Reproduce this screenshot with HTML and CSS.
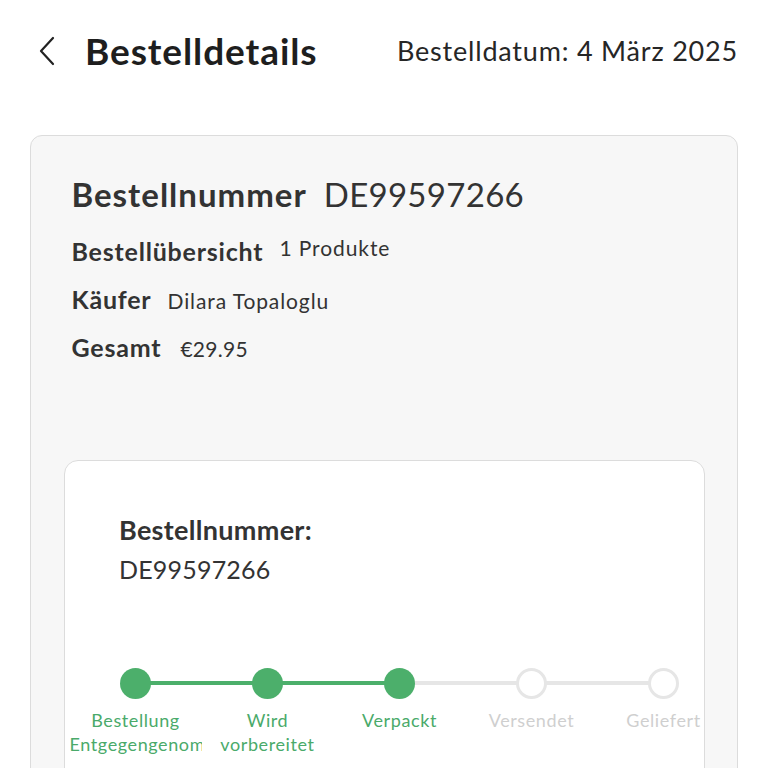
FILE: index.html
```html
<!DOCTYPE html>
<html lang="de">
<head>
<meta charset="utf-8">
<link rel="stylesheet" href="styles.css">
</head>
<body>
<div class="page">
  <header class="topbar">
    <div class="title-group">
      <svg class="back" width="18" height="30" viewBox="0 0 18 30"><path d="M15 2 L3 15 L15 28" fill="none" stroke="#222" stroke-width="2.2" stroke-linecap="round" stroke-linejoin="round"/></svg>
      <h1 class="title">Bestelldetails</h1>
    </div>
    <div class="date">Bestelldatum: 4 März 2025</div>
  </header>

  <section class="outer-card">
    <div class="order-head">
      <span class="oh-label">Bestellnummer</span>
      <span class="oh-value">DE99597266</span>
    </div>
    <div class="info-row">
      <span class="info-label">Bestellübersicht</span>
      <span class="info-value sup">1 Produkte</span>
    </div>
    <div class="info-row">
      <span class="info-label">Käufer</span>
      <span class="info-value">Dilara Topaloglu</span>
    </div>
    <div class="info-row">
      <span class="info-label">Gesamt</span>
      <span class="info-value wide">€29.95</span>
    </div>

    <div class="inner-card">
      <div class="inner-label">Bestellnummer:</div>
      <div class="inner-value">DE99597266</div>

      <div class="stepper">
        <div class="step done"><div class="track"><span class="line-r"></span><span class="dot"></span></div><div class="step-label">Bestellung<br>Entgegengenommen</div></div>
        <div class="step done"><div class="track"><span class="line-l"></span><span class="line-r"></span><span class="dot"></span></div><div class="step-label">Wird<br>vorbereitet</div></div>
        <div class="step done"><div class="track"><span class="line-l"></span><span class="line-r grey"></span><span class="dot"></span></div><div class="step-label">Verpackt</div></div>
        <div class="step todo"><div class="track"><span class="line-l"></span><span class="line-r"></span><span class="dot"></span></div><div class="step-label">Versendet</div></div>
        <div class="step todo"><div class="track"><span class="line-l"></span><span class="dot"></span></div><div class="step-label">Geliefert</div></div>
      </div>
    </div>
  </section>
</div>
</body>
</html>
```

FILE: styles.css
```css
* { box-sizing: border-box; }
html, body { margin: 0; padding: 0; background: #ffffff; }
body { font-family: "Lato", "Noto Sans", sans-serif; color: #222; }
.page { width: 768px; height: 768px; overflow: hidden; padding: 0 30px; }

.topbar {
  height: 105px;
  display: flex;
  align-items: center;
  justify-content: space-between;
  padding-bottom: 4px;
}
.title-group { display: flex; align-items: center; gap: 29px; padding-left: 8px; }
.back { display: block; }
.title { margin: 0; font-size: 37px; font-weight: 700; color: #1e1e1e; letter-spacing: 0.9px; }
.date { font-size: 27px; font-weight: 400; color: #262626; letter-spacing: 0.8px; }

.outer-card {
  margin-top: 30px;
  background: #f7f7f7;
  border: 1.5px solid #dcdcdc;
  border-radius: 12px;
  height: 700px;
  padding: 38px 33px 0 40.5px;
}
.order-head { display: flex; align-items: baseline; gap: 17px; }
.oh-label { font-size: 33px; font-weight: 700; color: #333; letter-spacing: 1px; }
.oh-value { font-size: 33px; font-weight: 400; color: #333; letter-spacing: 0.3px; }
.info-row { display: flex; align-items: baseline; gap: 16px; margin-top: 18px; }
.order-head + .info-row { margin-top: 22px; }
.info-label { font-size: 25px; font-weight: 700; color: #333; letter-spacing: 0.8px; }
.info-value { font-size: 21px; font-weight: 400; color: #333; letter-spacing: 0.9px; }
.info-value.sup { position: relative; top: -5px; }
.info-value.wide { margin-left: 3px; letter-spacing: 0.3px; }

.inner-card {
  margin: 98px -1px 0 -8px;
  background: #ffffff;
  border: 1.5px solid #dcdcdc;
  border-radius: 14px;
  height: 400px;
  overflow: hidden;
  padding: 52px 0 0 54.5px;
}
.inner-label { font-size: 27px; font-weight: 700; color: #333; letter-spacing: 0.3px; }
.inner-value { font-size: 25px; font-weight: 400; color: #333; margin-top: 8px; letter-spacing: 0.2px; }

.stepper {
  display: grid;
  grid-template-columns: repeat(5, 132px);
  margin: 83px 0 0 -49.5px;
  width: 660px;
}
.step { display: flex; flex-direction: column; align-items: center; }
.track { position: relative; width: 132px; height: 32px; }
.dot {
  position: absolute; left: 50%; top: 50%;
  width: 31px; height: 31px; margin: -15.5px 0 0 -15.5px;
  border-radius: 50%;
}
.line-l, .line-r { position: absolute; top: 14px; height: 4px; width: 66px; }
.line-l { left: 0; }
.line-r { right: 0; }
.done .dot { background: #4caf6b; }
.done .line-l, .done .line-r { background: #4caf6b; }
.done .line-r.grey { background: #e6e6e6; }
.todo .dot { background: #fff; border: 3px solid #e6e6e6; }
.todo .line-l, .todo .line-r { background: #e6e6e6; }

.step-label {
  width: 132px;
  overflow: hidden;
  white-space: nowrap;
  text-align: center;
  font-size: 18px;
  line-height: 24px;
  margin-top: 9px;
  letter-spacing: 0.6px;
}
.done .step-label { color: #4aaa6a; }
.todo .step-label { color: #cfcfcf; }
```
